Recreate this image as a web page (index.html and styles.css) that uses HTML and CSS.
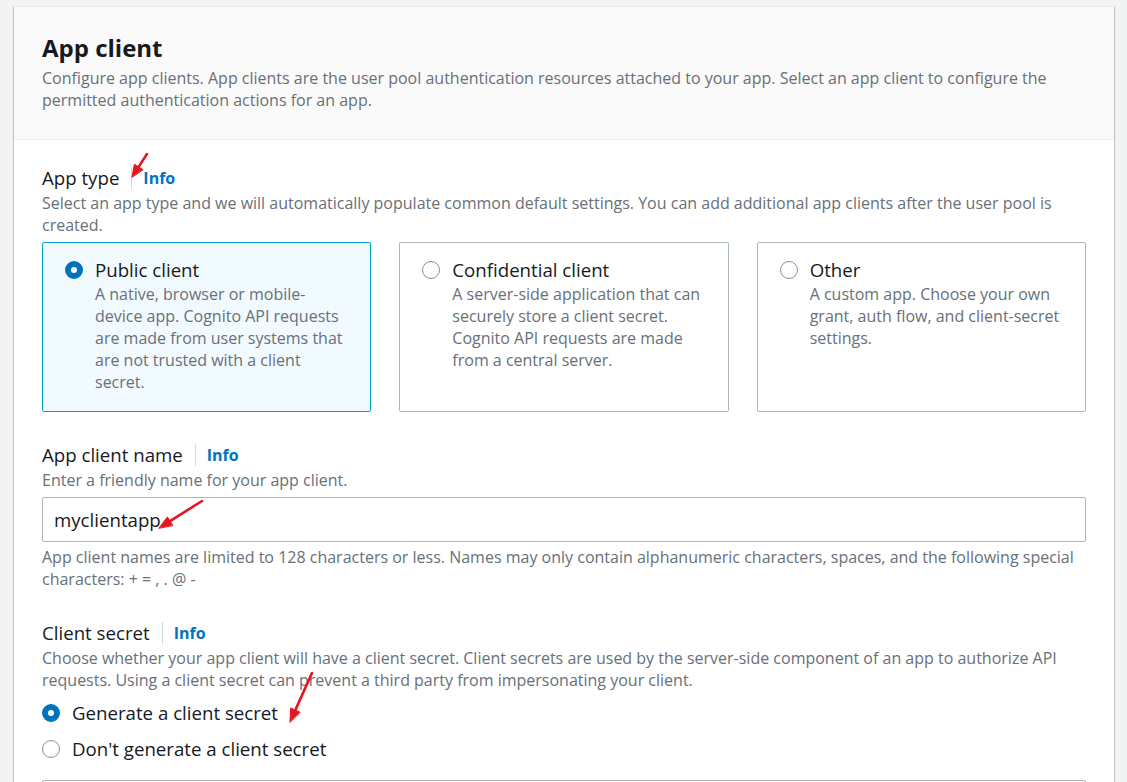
FILE: index.html
```html
<!DOCTYPE html>
<html lang="en">
<head>
<meta charset="utf-8">
<title>App client</title>
<link rel="stylesheet" href="styles.css">
</head>
<body>
<div class="page">
  <div class="container">
    <div class="container-header">
      <h2 class="title">App client</h2>
      <p class="desc">Configure app clients. App clients are the user pool authentication resources attached to your app. Select an app client to configure the permitted authentication actions for an app.</p>
    </div>
    <div class="container-body">
      <div class="section">
        <div class="field-label">
          <span>App type</span>
          <span class="sep"></span>
          <a class="info">Info</a>
        </div>
        <p class="desc">Select an app type and we will automatically populate common default settings. You can add additional app clients after the user pool is created.</p>
        <div class="tiles">
          <div class="tile selected">
            <span class="radio checked"></span>
            <div class="tile-text">
              <div class="tile-label">Public client</div>
              <div class="desc">A native, browser or mobile-device app. Cognito API requests are made from user systems that are not trusted with a client secret.</div>
            </div>
          </div>
          <div class="tile">
            <span class="radio"></span>
            <div class="tile-text">
              <div class="tile-label">Confidential client</div>
              <div class="desc">A server-side application that can securely store a client secret. Cognito API requests are made from a central server.</div>
            </div>
          </div>
          <div class="tile">
            <span class="radio"></span>
            <div class="tile-text">
              <div class="tile-label">Other</div>
              <div class="desc">A custom app. Choose your own grant, auth flow, and client-secret settings.</div>
            </div>
          </div>
        </div>
      </div>

      <div class="section">
        <div class="field-label">
          <span>App client name</span>
          <span class="sep"></span>
          <a class="info">Info</a>
        </div>
        <p class="desc">Enter a friendly name for your app client.</p>
        <input class="text-input" type="text" value="myclientapp">
        <p class="desc constraint">App client names are limited to 128 characters or less. Names may only contain alphanumeric characters, spaces, and the following special characters: + = , . @ -</p>
      </div>

      <div class="section">
        <div class="field-label">
          <span>Client secret</span>
          <span class="sep"></span>
          <a class="info">Info</a>
        </div>
        <p class="desc">Choose whether your app client will have a client secret. Client secrets are used by the server-side component of an app to authorize API requests. Using a client secret can prevent a third party from impersonating your client.</p>
        <div class="radio-group">
          <div class="radio-row"><span class="radio checked"></span><span>Generate a client secret</span></div>
          <div class="radio-row"><span class="radio"></span><span>Don't generate a client secret</span></div>
        </div>
        <div class="next-box"></div>
      </div>
    </div>
  </div>
</div>

<svg class="annotations" width="1127" height="782" viewBox="0 0 1127 782" aria-hidden="true">
  <g stroke="#e5161d" stroke-width="2.6" stroke-linecap="round" fill="#e5161d">
    <line x1="147" y1="154" x2="138.6" y2="166.9"/>
    <polygon points="132,177 134.4,164.2 142.8,169.6" stroke-width="1"/>
    <line x1="202" y1="501" x2="170" y2="521.1"/>
    <polygon points="159,528 167.4,516.9 172.7,525.3" stroke-width="1"/>
    <line x1="312" y1="673" x2="295.3" y2="710.1"/>
    <polygon points="290,722 290.7,708 299.9,712.2" stroke-width="1"/>
  </g>
</svg>
</body>
</html>
```
FILE: styles.css
```css
* { box-sizing: border-box; }

html, body {
  margin: 0;
  padding: 0;
  background: #f2f3f3;
}

body {
  font-family: "Open Sans", "Noto Sans", sans-serif;
  color: #16191f;
  height: 782px;
  overflow: hidden;
}

.page {
  height: 782px;
  overflow: hidden;
  padding: 6px 13px 0 14px;
}

.container {
  background: #ffffff;
  box-shadow: 0 1px 1px 0 rgba(0, 28, 36, 0.3), 1px 1px 1px 0 rgba(0, 28, 36, 0.15), -1px 1px 1px 0 rgba(0, 28, 36, 0.15);
  border-top: 1px solid #eaeded;
}

.container-header {
  background: #fafafa;
  border-bottom: 1px solid #eaeded;
  padding: 25px 28px 28px 28px;
}

.title {
  margin: 0 0 3px 0;
  font-size: 24px;
  line-height: 32px;
  font-weight: 700;
  color: #16191f;
}

.desc {
  margin: 0;
  font-size: 16px;
  line-height: 22px;
  color: #687078;
}

.container-body {
  padding: 24px 28px 0 28px;
}

.section + .section {
  margin-top: 29px;
}

.field-label {
  display: flex;
  align-items: center;
  font-size: 18.67px;
  line-height: 28px;
  color: #16191f;
}

.sep {
  width: 1px;
  height: 22px;
  background: #d5dbdb;
  margin: 0 11px 0 12px;
}

.info {
  font-size: 16px;
  font-weight: 700;
  color: #0073bb;
  text-decoration: none;
}

.tiles {
  margin-top: 6px;
  display: grid;
  grid-template-columns: repeat(3, 1fr);
  gap: 28px;
}

.tile {
  display: flex;
  gap: 12px;
  border: 1px solid #aab7b8;
  border-radius: 2px;
  padding: 14px 20px 18px 22px;
  background: #ffffff;
}

.tile.selected {
  border-color: #00a1c9;
  background: #f1faff;
}

.tile-label {
  font-size: 18.67px;
  line-height: 26px;
  color: #16191f;
}

.radio {
  flex: 0 0 auto;
  width: 18px;
  height: 18px;
  border-radius: 50%;
  border: 1.5px solid #879596;
  background: #ffffff;
}

.tile .radio {
  margin-top: 4px;
}

.radio.checked {
  border: 6px solid #0073bb;
  background: #ffffff;
}

.text-input {
  display: block;
  width: 100%;
  height: 45px;
  margin: 6px 0 0 0;
  padding: 0 11px;
  border: 1px solid #aab7b8;
  border-radius: 2px;
  background: #ffffff;
  font-family: "Open Sans", "Noto Sans", sans-serif;
  font-size: 18.67px;
  color: #16191f;
  outline: none;
}

.constraint {
  margin-top: 4px;
}

.radio-group {
  margin-top: 8px;
  display: flex;
  flex-direction: column;
  gap: 8px;
}

.radio-row {
  display: flex;
  align-items: center;
  gap: 12px;
  font-size: 18.67px;
  line-height: 28px;
  color: #16191f;
}

.next-box {
  margin-top: 17px;
  height: 40px;
  border: 1px solid #aab7b8;
  border-radius: 2px;
}

.annotations {
  position: absolute;
  top: 0;
  left: 0;
  pointer-events: none;
}
```
